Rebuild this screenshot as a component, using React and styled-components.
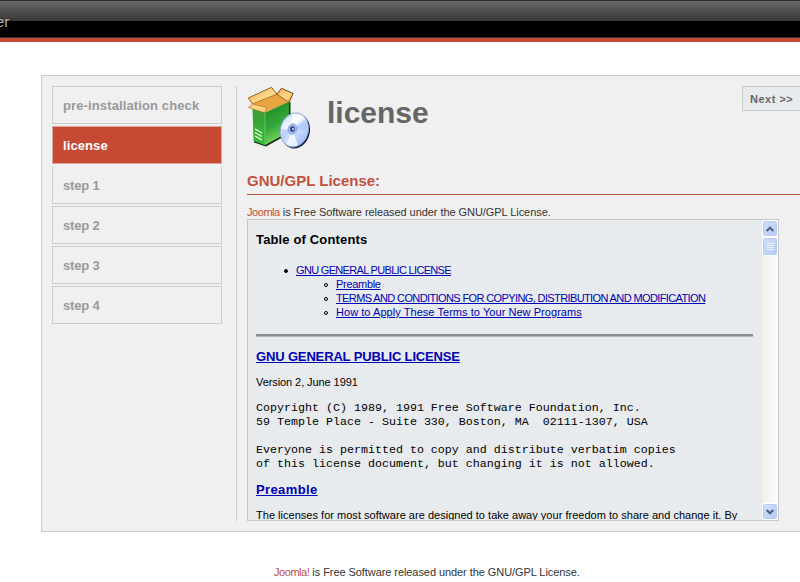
import React, { Component } from 'react';
import styled, { createGlobalStyle } from 'styled-components';

const GlobalStyle = createGlobalStyle`
    html, body {
        margin: 0;
        padding: 0;
        height: 582px;
        overflow: hidden;
        background: #fff;
    }
    body {
        font-family: "Liberation Sans", Arial, sans-serif;
        font-size: 11px;
        color: #333;
    }
    * {
        box-sizing: border-box;
    }
`
const Header = styled.div`
    height: 38px;
    padding-top: 12px;
    border-top: 1px solid #2e2e2e;
    border-bottom: 1px solid #333;
    background: linear-gradient(#686868, #363636) 0 0 / 100% 20px no-repeat #000;
    color: #b0b0b0;
    font-size: 15px;
    line-height: 18px;
    text-indent: -4px;
`
const HeaderLine = styled.div`
    height: 4px;
    background: #c64934;
`
const Panel = styled.div`
    display: flex;
    height: 457px;
    margin: 33px 0 0 41px;
    padding: 10px 0 10px 10px;
    border: 1px solid #c9c9c9;
    border-right: 0;
    background: #f0f0f0;
`
const Steps = styled.div`
    display: flex;
    flex-direction: column;
    flex: none;
    gap: 2px;
    width: 170px;
`
const Step = styled.div`
    height: 38px;
    padding-left: 10px;
    border: 1px solid ${p => p.$active ? '#e2a79c' : '#ccc'};
    ${p => p.$after && 'border-top-color: #f0f0f0;'}
    background: ${p => p.$active ? '#c64934' : '#f0f0f0'};
    color: ${p => p.$active ? '#fff' : '#999'};
    font-size: 13px;
    font-weight: bold;
    line-height: 37px;
    letter-spacing: ${p => p.$spacing || 0}px;
`
const Content = styled.div`
    flex: 1;
    height: 435px;
    margin-left: 14px;
    padding-left: 10px;
    border-left: 1px solid #ccc;
`
const TitleBar = styled.div`
    display: flex;
    height: 64px;
`
const Title = styled.h1`
    flex: 1;
    margin: 0 0 0 16px;
    color: #666;
    font-size: 30px;
    line-height: 54px;
`
const NextButton = styled.div`
    width: 58px;
    height: 25px;
    padding-left: 7px;
    border: 1px solid #c9cbcd;
    border-right: 0;
    background: #e8ebee;
    color: #666;
    font-size: 11px;
    font-weight: bold;
    line-height: 24px;
    letter-spacing: .5px;
    white-space: nowrap;
`
const SectionTitle = styled.h2`
    height: 29px;
    margin: 16px 0 0;
    padding-top: 6px;
    border-bottom: 1px solid #b9503f;
    color: #c0513e;
    font-size: 15px;
    line-height: 18px;
`
const Note = styled.div`
    height: 24px;
    padding-top: 10px;
    line-height: 14px;
    white-space: nowrap;
    letter-spacing: -.06px;
    span {
        color: #c0513e;
        letter-spacing: -.45px;
    }
`
const Frame = styled.div`
    display: flex;
    width: 532px;
    height: 302px;
    border: 1px solid #c5c7c9;
    background: #e8ebee;
    color: #000;
`
const Doc = styled.div`
    flex: 1;
    height: 300px;
    padding: 0 9px 0 8px;
    overflow: hidden;
    white-space: nowrap;
`
const Heading = styled.h3`
    margin: ${p => p.$top}px 0 0;
    font-size: 13px;
    line-height: 16px;
    letter-spacing: ${p => p.$spacing}px;
`
const Link = styled.a`
    color: #0000b4;
    text-decoration: underline;
`
const List = styled.ul`
    margin: ${p => p.$top || 0}px 0 0;
    padding-left: 40px;
    list-style: none;
`
const Item = styled.li`
    line-height: 14px;
    letter-spacing: ${p => p.$spacing}px;
`
const Bullet = styled.i`
    display: inline-block;
    width: 4px;
    height: 4px;
    margin: 0 8px 1px -12px;
    border: 1px solid #000;
    border-radius: 2px;
    background: ${p => p.$full ? '#000' : 'transparent'};
`
const Rule = styled.div`
    height: 3px;
    margin-top: 15px;
    border-top: 2px solid #8b8b8b;
    border-bottom: 1px solid #b5b7b9;
`
const Text = styled.p`
    margin: ${p => p.$top}px 0 0;
    line-height: 14px;
    letter-spacing: ${p => p.$spacing}px;
`
const Pre = styled.pre`
    margin: 12px 0 0;
    font-family: "Liberation Mono", "Courier New", monospace;
    font-size: 11.67px;
    line-height: 14px;
`
const ScrollBar = styled.div`
    display: flex;
    flex-direction: column;
    width: 16px;
    background: linear-gradient(90deg, #f0efea, #fdfdfa);
`
const ScrollPart = styled.div`
    display: flex;
    align-items: center;
    justify-content: center;
    height: ${p => p.$height}px;
    margin-top: ${p => p.$top || 0};
    border: 1px solid #fff;
    border-radius: 3px;
    background: linear-gradient(135deg, #d3e0fc, #b5c9f7);
    box-shadow: inset 0 0 0 1px #b9caf3;
`
const Footer = styled.div`
    margin: 33px 0 0 274px;
    line-height: 14px;
    white-space: nowrap;
    letter-spacing: -.07px;
    span {
        color: #c0513e;
        letter-spacing: -.45px;
    }
`

const BoxIcon = () => (
    <svg width="64" height="64" viewBox="0 0 64 64">
        <defs>
            <linearGradient id="front" x1="0" y1="0" x2="0.3" y2="1">
                <stop offset="0" stopColor="#168a25" />
                <stop offset=".6" stopColor="#35a63a" />
                <stop offset="1" stopColor="#7ddb62" />
            </linearGradient>
            <linearGradient id="side" x1="0" y1="0" x2="0" y2="1">
                <stop offset="0" stopColor="#3a9c37" />
                <stop offset="1" stopColor="#38ba3a" />
            </linearGradient>
            <linearGradient id="flap" x1="0" y1="0" x2="1" y2="1">
                <stop offset="0" stopColor="#f0b04a" />
                <stop offset=".6" stopColor="#ffd98c" />
                <stop offset="1" stopColor="#e79b2d" />
            </linearGradient>
            <linearGradient id="disc" x1="0" y1="0" x2="1" y2="1">
                <stop offset="0" stopColor="#b9d0fa" />
                <stop offset=".35" stopColor="#f6faff" />
                <stop offset=".6" stopColor="#c2d8fd" />
                <stop offset="1" stopColor="#8fb2f3" />
            </linearGradient>
        </defs>
        <path d="M7 25 L19 28 L43.500 16 V47 L19 60.500 L7 56.500Z" fill="#173019" />
        <path d="M5 17 L29.700 8 L42 16 L18.500 26Z" fill="#e09a35" />
        <path d="M5.500 23 L18 26.500 V59 L6.500 55Z" fill="url(#side)" />
        <path d="M18 26.500 L42 15.500 V46 L18 59Z" fill="url(#front)" />
        <path d="M18 26.500 V58.500" stroke="#71c967" strokeWidth=".8" />
        <path d="M1.300 12 L24.500 1.300 L30 8.300 L5.500 18Z" fill="url(#flap)" stroke="#8d5514" strokeWidth=".9" />
        <path d="M29.700 8.300 L34.500 2.300 L46 7.500 L42 16.500Z" fill="url(#flap)" stroke="#70430f" strokeWidth="1" />
        <path d="M5.500 18 L1.500 21.500 L18 26.500 L41.500 16 L29.700 8.500Z" fill="#eba847" opacity=".75" />
        <path d="M1.500 21.500 L5.500 18 L20 21.500 L17.500 26.500Z" fill="#ffd284" stroke="#a66a1b" strokeWidth=".6" />
        <path d="M8 43 L15 47 M8 46.500 L15 50.500 M8 50 L15 54" stroke="#e5ffdc" strokeWidth="1.300" />
        <ellipse cx="48.800" cy="45.200" rx="14" ry="17.500" transform="rotate(14 48.800 45.200)" fill="#141d38" />
        <ellipse cx="47.400" cy="44" rx="14" ry="17.300" transform="rotate(14 47.400 44)" fill="url(#disc)" stroke="#809fd8" strokeWidth=".8" />
        <path d="M45 43 L45 28 Q51 27 55 31Z M46 45 L39 58 Q45 62 51 59Z" fill="#fff" opacity=".75" />
        <path d="M47 43 L58 33 Q61 38 60 44Z M44 44 L34.500 43 Q33.500 50 36 55Z" fill="#a5c2fa" opacity=".65" />
        <ellipse cx="45.500" cy="43" rx="4.500" ry="5.300" transform="rotate(17 45.500 43)" fill="#a3b7ea" stroke="#7f95d3" strokeWidth=".6" />
        <ellipse cx="45.500" cy="43" rx="2.200" ry="2.700" fill="#22337a" />
        <ellipse cx="46" cy="43" rx=".9" ry="1.200" fill="#dfeaff" />
    </svg>
)

class App extends Component {
    render() {
        return (
            <div>
                <GlobalStyle />
                <Header>er</Header>
                <HeaderLine />
                <Panel>
                    <Steps>
                        <Step $spacing={.12}>pre-installation check</Step>
                        <Step $active $spacing={.1}>license</Step>
                        <Step $after $spacing={-.15}>step 1</Step>
                        <Step $spacing={-.15}>step 2</Step>
                        <Step $spacing={-.15}>step 3</Step>
                        <Step $spacing={-.15}>step 4</Step>
                    </Steps>
                    <Content>
                        <TitleBar>
                            <BoxIcon />
                            <Title>license</Title>
                            <NextButton>Next &gt;&gt;</NextButton>
                        </TitleBar>
                        <SectionTitle>GNU/GPL License:</SectionTitle>
                        <Note><span>Joomla</span> is Free Software released under the GNU/GPL License.</Note>
                        <Frame>
                            <Doc>
                                <Heading $top={12} $spacing={.15}>Table of Contents</Heading>
                                <List $top={15}>
                                    <Item $spacing={-.68}>
                                        <Bullet $full /><Link>GNU GENERAL PUBLIC LICENSE</Link>
                                        <List>
                                            <Item $spacing={-.3}><Bullet /><Link>Preamble</Link></Item>
                                            <Item $spacing={-.615}><Bullet /><Link>TERMS AND CONDITIONS FOR COPYING, DISTRIBUTION AND MODIFICATION</Link></Item>
                                            <Item $spacing={.05}><Bullet /><Link>How to Apply These Terms to Your New Programs</Link></Item>
                                        </List>
                                    </Item>
                                </List>
                                <Rule />
                                <Heading $top={12} $spacing={-.15}><Link>GNU GENERAL PUBLIC LICENSE</Link></Heading>
                                <Text $top={10} $spacing={-.08}>Version 2, June 1991</Text>
                                <Pre>{`Copyright (C) 1989, 1991 Free Software Foundation, Inc.
59 Temple Place - Suite 330, Boston, MA  02111-1307, USA

Everyone is permitted to copy and distribute verbatim copies
of this license document, but changing it is not allowed.`}</Pre>
                                <Heading $top={11} $spacing={.38}><Link>Preamble</Link></Heading>
                                <Text $top={10} $spacing={.02}>The licenses for most software are designed to take away your freedom to share and change it. By</Text>
                            </Doc>
                            <ScrollBar>
                                <ScrollPart $height={17}>
                                    <svg width="8" height="6" viewBox="0 0 8 6"><path d="M.7 5 L4 1.700 L7.300 5" fill="none" stroke="#4d6185" strokeWidth="2" /></svg>
                                </ScrollPart>
                                <ScrollPart $height={19}>
                                    <svg width="7" height="8" viewBox="0 0 7 8"><path d="M0 .5H7M0 2.500H7M0 4.500H7M0 6.500H7" stroke="#eef4fe" /></svg>
                                </ScrollPart>
                                <ScrollPart $height={17} $top="auto">
                                    <svg width="8" height="6" viewBox="0 0 8 6"><path d="M.7 1 L4 4.300 L7.300 1" fill="none" stroke="#4d6185" strokeWidth="2" /></svg>
                                </ScrollPart>
                            </ScrollBar>
                        </Frame>
                    </Content>
                </Panel>
                <Footer><span>Joomla!</span> is Free Software released under the GNU/GPL License.</Footer>
            </div>
        );
    }
}

export default App;
